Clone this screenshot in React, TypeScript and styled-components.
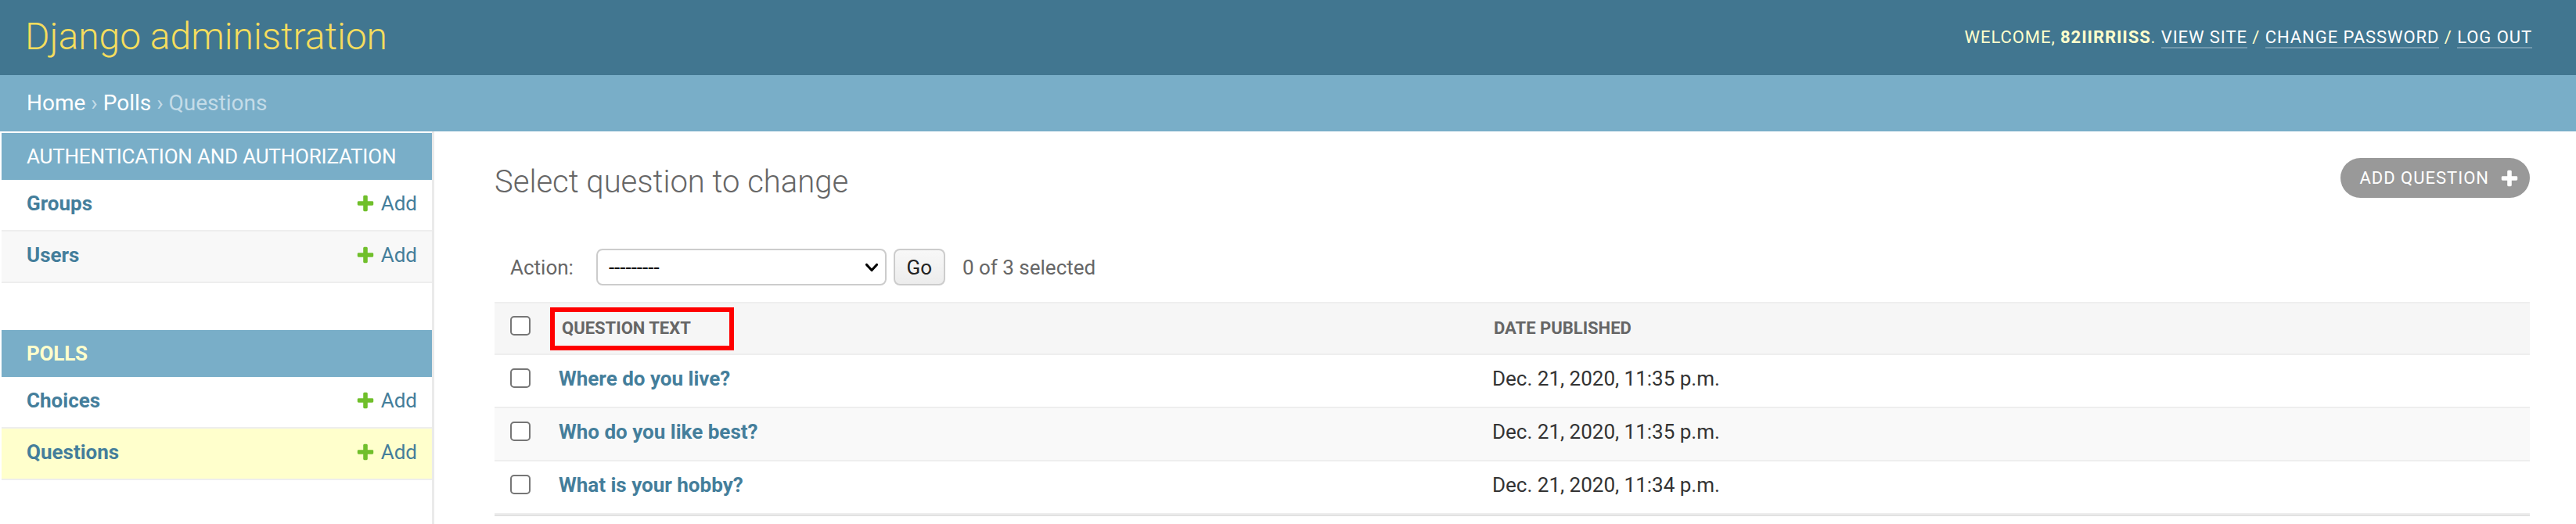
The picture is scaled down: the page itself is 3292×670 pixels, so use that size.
import React from "react";
import styled, { createGlobalStyle } from "styled-components";

const GlobalStyle = createGlobalStyle`
  html, body { margin: 0; padding: 0; background: #fff; overflow: hidden; }
  body { font-family: Roboto, "Liberation Sans", Arial, sans-serif; color: #333; }
  *, *::before, *::after { box-sizing: border-box; }
`;

const Page = styled.div`
  min-height: 100vh;
  display: flex;
  flex-direction: column;
`;

const Header = styled.header`
  height: 96px;
  flex-shrink: 0;
  background: #417690;
  display: flex;
  align-items: center;
  justify-content: space-between;
  padding: 0 56px 0 32px;
`;

const Branding = styled.h1`
  margin: 0;
  padding-bottom: 3px;
  font-size: 48px;
  line-height: 48px;
  font-weight: 300;
  color: #f5dd5d;
`;

const UserTools = styled.div`
  font-size: 22px;
  line-height: 22px;
  letter-spacing: 0.93px;
  text-transform: uppercase;
  color: #ffc;
`;

const UserName = styled.strong`
  font-weight: 700;
`;

const ToolLink = styled.a`
  color: #fff;
  text-decoration: none;
  border-bottom: 2px solid rgba(255, 255, 255, 0.25);
`;

const Breadcrumbs = styled.nav`
  height: 72px;
  flex-shrink: 0;
  background: #79aec8;
  padding: 0 34px;
  display: flex;
  align-items: center;
  font-size: 28px;
  line-height: 28px;
  color: #c4dce8;
`;

const Crumb = styled.a`
  color: #fff;
  text-decoration: none;
`;

const Main = styled.div`
  flex: 1;
  display: flex;
`;

const Sidebar = styled.nav`
  width: 555px;
  flex-shrink: 0;
  padding: 2px 0 0 2px;
  border-right: 3px solid #eaeaea;
`;

const AppModule = styled.section`
  margin-bottom: 60px;
`;

const Caption = styled.div<{ $current?: boolean }>`
  height: 60px;
  line-height: 60px;
  padding: 0 32px;
  background: #79aec8;
  color: ${(p) => (p.$current ? "#ffc" : "#fff")};
  font-size: 26px;
  letter-spacing: -0.2px;
  font-weight: ${(p) => (p.$current ? 700 : 400)};
  text-transform: uppercase;
`;

const ModelRow = styled.div<{ $tone: "plain" | "alt" | "current" }>`
  height: 66px;
  display: flex;
  align-items: flex-start;
  justify-content: space-between;
  padding: 14px 19px 0 32px;
  border-bottom: 2px solid #eee;
  background: ${(p) =>
    p.$tone === "current" ? "#ffc" : p.$tone === "alt" ? "#f8f8f8" : "#fff"};
`;

const ModelLink = styled.a`
  font-size: 26px;
  line-height: 32px;
  font-weight: 700;
  color: #447e9b;
  text-decoration: none;
`;

const AddLink = styled.a`
  display: inline-flex;
  align-items: center;
  gap: 7px;
  font-size: 26px;
  line-height: 32px;
  color: #447e9b;
  text-decoration: none;
`;

const Content = styled.main`
  flex: 1;
  min-width: 0;
  padding: 0 59px 0 77px;
`;

const ContentHead = styled.div`
  display: flex;
  justify-content: space-between;
  align-items: flex-start;
  padding-top: 34px;
`;

const Title = styled.h1`
  margin: 7px 0 0;
  font-size: 40px;
  line-height: 48px;
  font-weight: 300;
  color: #666;
`;

const ObjectTool = styled.a`
  display: inline-flex;
  align-items: center;
  gap: 13px;
  height: 51px;
  padding: 0 13px 0 24px;
  border-radius: 30px;
  background: #999;
  color: #fff;
  font-size: 22px;
  line-height: 22px;
  letter-spacing: 1px;
  text-transform: uppercase;
  text-decoration: none;
`;

const ActionBar = styled.div`
  display: flex;
  align-items: center;
  height: 47px;
  margin-top: 61px;
  padding-left: 20px;
  font-size: 26px;
  color: #666;
`;

const ActionLabel = styled.label`
  margin-right: 29px;
  color: #666;
`;

const SelectBox = styled.div`
  width: 371px;
  height: 47px;
  display: flex;
  align-items: center;
  padding: 0 8px 0 14px;
  border: 2px solid #ccc;
  border-radius: 8px;
  background: #fff;
`;

const ActionSelect = styled.select`
  flex: 1;
  appearance: none;
  border: 0;
  outline: none;
  background: transparent;
  padding: 0;
  font-family: Roboto, "Liberation Sans", Arial, sans-serif;
  font-size: 26px;
  color: #000;
`;

const GoButton = styled.button`
  width: 66px;
  height: 47px;
  margin-left: 9px;
  border: 2px solid #ccc;
  border-radius: 8px;
  background: linear-gradient(#f8f8f8, #ececec);
  font-family: Roboto, "Liberation Sans", Arial, sans-serif;
  font-size: 26px;
  color: #222;
  padding: 0;
`;

const Counter = styled.span`
  margin-left: 22px;
  color: #666;
`;

const Results = styled.div`
  margin-top: 21px;
  border-bottom: 2px solid #e2e2e2;
`;

const Table = styled.table`
  width: 100%;
  table-layout: fixed;
  border-collapse: separate;
  border-spacing: 0;
`;

const HeadCell = styled.th<{ $pad: number; $top?: boolean }>`
  height: 68px;
  padding: ${(p) => (p.$top ? "16px" : "0")} 0 0 ${(p) => p.$pad}px;
  vertical-align: ${(p) => (p.$top ? "top" : "middle")};
  text-align: left;
  background: #f6f6f6;
  border-top: 2px solid #eee;
  border-bottom: 2px solid #eee;
  font-size: 22px;
  line-height: 22px;
  font-weight: 700;
  color: #666;
  text-transform: uppercase;
`;

const Marked = styled.span`
  display: inline-flex;
  align-items: center;
  vertical-align: middle;
  width: 235px;
  height: 55px;
  padding-left: 9px;
  border: 6px solid #f00;
`;

const BodyRow = styled.tr`
  &:nth-child(even) td {
    background: #f9f9f9;
  }
`;

const Cell = styled.td<{ $pad: number }>`
  height: 68px;
  padding: 14px 0 0 ${(p) => p.$pad}px;
  vertical-align: top;
  border-bottom: 2px solid #eee;
  background: #fff;
  font-size: 26px;
  line-height: 32px;
  color: #333;
`;

const RowLink = styled.a`
  font-weight: 700;
  color: #447e9b;
  text-decoration: none;
`;

const Check = styled.input<{ $offset: number }>`
  appearance: none;
  display: block;
  width: 26px;
  height: 25px;
  margin: ${(p) => p.$offset}px 0 0;
  border: 2px solid #767676;
  border-radius: 5px;
  background: #fff;
`;

const Chevron = styled.svg`
  flex-shrink: 0;
  pointer-events: none;
`;

const PlusIcon = ({ size, color }: { size: number; color: string }) => (
  <svg width={size} height={size} viewBox="0 0 1792 1792" aria-hidden="true">
    <path
      fill={color}
      d="M1600 796v192q0 40-28 68t-68 28h-416v416q0 40-28 68t-68 28h-192q-40 0-68-28t-28-68v-416h-416q-40 0-68-28t-28-68v-192q0-40 28-68t68-28h416v-416q0-40 28-68t68-28h192q40 0 68 28t28 68v416h416q40 0 68 28t28 68z"
    />
  </svg>
);

type Model = { name: string; tone: "plain" | "alt" | "current" };

const apps: { label: string; current?: boolean; models: Model[] }[] = [
  {
    label: "Authentication and Authorization",
    models: [
      { name: "Groups", tone: "plain" },
      { name: "Users", tone: "alt" },
    ],
  },
  {
    label: "Polls",
    current: true,
    models: [
      { name: "Choices", tone: "plain" },
      { name: "Questions", tone: "current" },
    ],
  },
];

const questions = [
  { text: "Where do you live?", date: "Dec. 21, 2020, 11:35 p.m." },
  { text: "Who do you like best?", date: "Dec. 21, 2020, 11:35 p.m." },
  { text: "What is your hobby?", date: "Dec. 21, 2020, 11:34 p.m." },
];

export default function App() {
  return (
    <>
      <GlobalStyle />
      <Page>
        <Header>
          <Branding>Django administration</Branding>
          <UserTools>
            Welcome, <UserName>82IIRRIISS</UserName>.{" "}
            <ToolLink href="#">View site</ToolLink> /{" "}
            <ToolLink href="#">Change password</ToolLink> /{" "}
            <ToolLink href="#">Log out</ToolLink>
          </UserTools>
        </Header>
        <Breadcrumbs>
          <span>
            <Crumb href="#">Home</Crumb> › <Crumb href="#">Polls</Crumb> › Questions
          </span>
        </Breadcrumbs>
        <Main>
          <Sidebar>
            {apps.map((app) => (
              <AppModule key={app.label}>
                <Caption $current={app.current}>{app.label}</Caption>
                {app.models.map((m) => (
                  <ModelRow key={m.name} $tone={m.tone}>
                    <ModelLink href="#">{m.name}</ModelLink>
                    <AddLink href="#">
                      <PlusIcon size={26} color="#70bf2b" />
                      Add
                    </AddLink>
                  </ModelRow>
                ))}
              </AppModule>
            ))}
          </Sidebar>
          <Content>
            <ContentHead>
              <Title>Select question to change</Title>
              <ObjectTool href="#">
                Add question
                <PlusIcon size={26} color="#fff" />
              </ObjectTool>
            </ContentHead>
            <ActionBar>
              <ActionLabel>Action:</ActionLabel>
              <SelectBox>
                <ActionSelect defaultValue="">
                  <option value="">---------</option>
                  <option value="delete_selected">Delete selected questions</option>
                </ActionSelect>
                <Chevron width="18" height="12" viewBox="0 0 18 12" aria-hidden="true">
                  <polyline
                    points="2.5,2.5 9,9.5 15.5,2.5"
                    fill="none"
                    stroke="#000"
                    strokeWidth="3.2"
                    strokeLinecap="round"
                    strokeLinejoin="round"
                  />
                </Chevron>
              </SelectBox>
              <GoButton type="button">Go</GoButton>
              <Counter>0 of 3 selected</Counter>
            </ActionBar>
            <Results>
              <Table>
                <colgroup>
                  <col style={{ width: 66 }} />
                  <col style={{ width: 1193 }} />
                  <col />
                </colgroup>
                <thead>
                  <tr>
                    <HeadCell $pad={20} $top>
                      <Check type="checkbox" $offset={0} aria-label="Select all" />
                    </HeadCell>
                    <HeadCell $pad={5}>
                      <Marked>Question text</Marked>
                    </HeadCell>
                    <HeadCell $pad={18}>Date published</HeadCell>
                  </tr>
                </thead>
                <tbody>
                  {questions.map((q) => (
                    <BodyRow key={q.text}>
                      <Cell $pad={20}>
                        <Check type="checkbox" $offset={3} aria-label={q.text} />
                      </Cell>
                      <Cell $pad={16}>
                        <RowLink href="#">{q.text}</RowLink>
                      </Cell>
                      <Cell $pad={16}>{q.date}</Cell>
                    </BodyRow>
                  ))}
                </tbody>
              </Table>
            </Results>
          </Content>
        </Main>
      </Page>
    </>
  );
}
